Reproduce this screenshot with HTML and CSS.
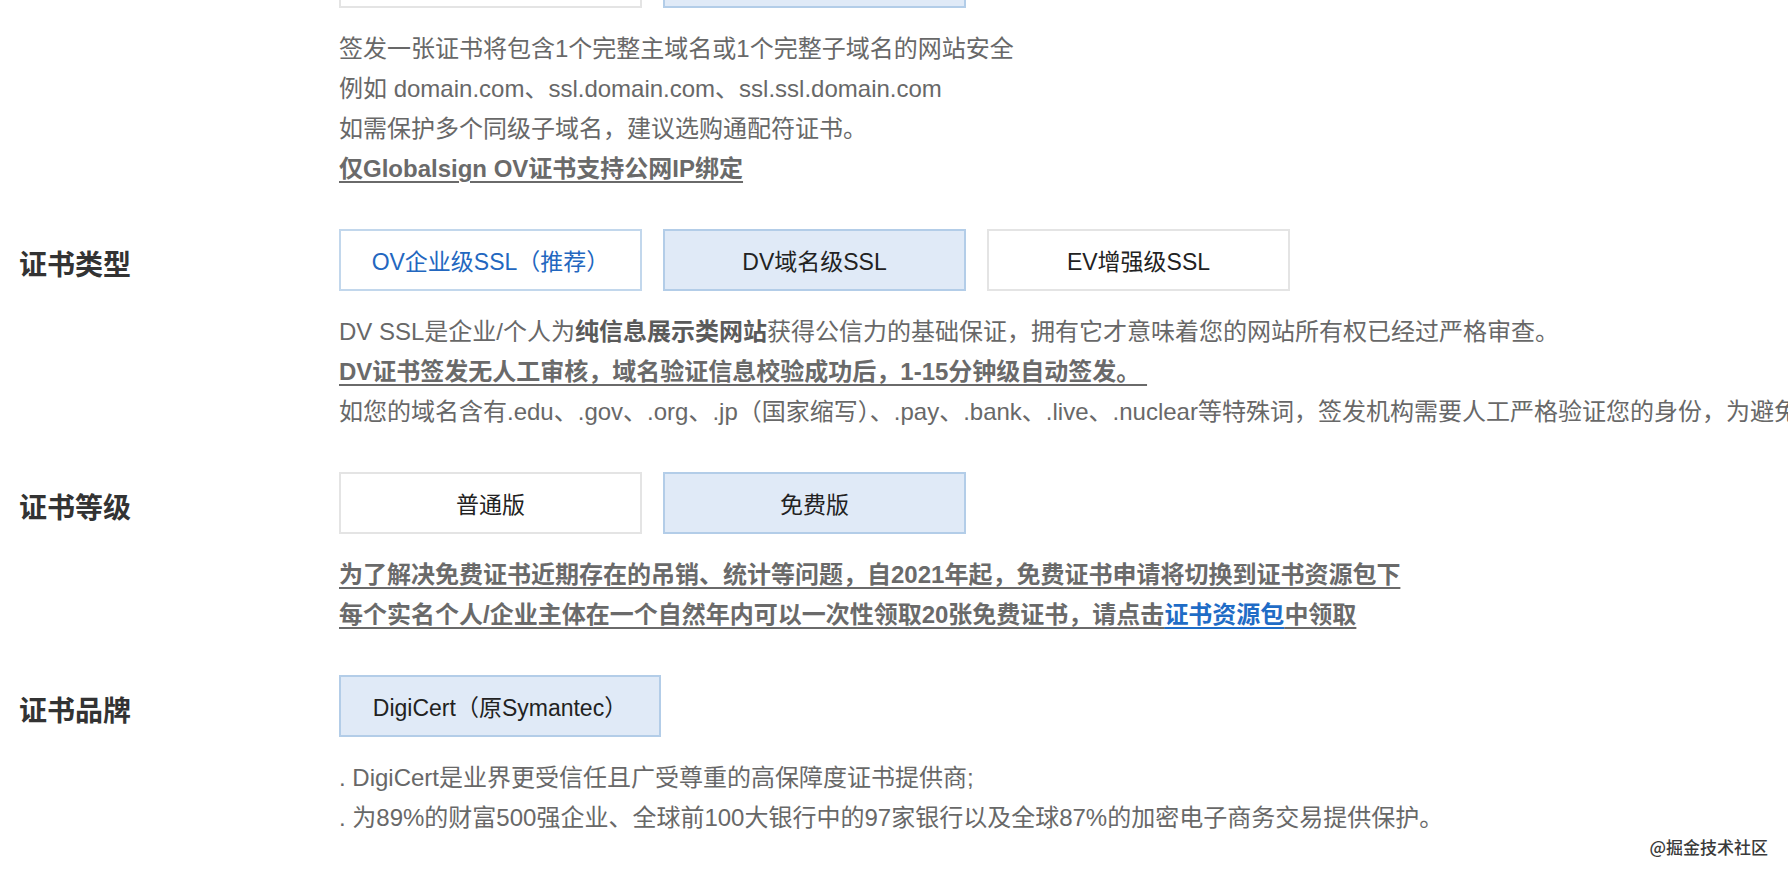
FILE: index.html
```html
<!DOCTYPE html>
<html lang="zh-CN">
<head>
<meta charset="utf-8">
<title>SSL证书选购</title>
<link rel="stylesheet" href="styles.css">
</head>
<body>
<div class="page">
  <div class="row row-first">
    <div class="label"></div>
    <div class="content">
      <div class="opts">
        <div class="opt"></div>
        <div class="opt sel"></div>
      </div>
      <div class="desc">
        <p>签发一张证书将包含1个完整主域名或1个完整子域名的网站安全</p>
        <p>例如 domain.com、ssl.domain.com、ssl.ssl.domain.com</p>
        <p>如需保护多个同级子域名，建议选购通配符证书。</p>
        <p class="strong">仅Globalsign OV证书支持公网IP绑定</p>
      </div>
    </div>
  </div>

  <div class="row">
    <div class="label">证书类型</div>
    <div class="content">
      <div class="opts">
        <div class="opt rec">OV企业级SSL（推荐）</div>
        <div class="opt sel">DV域名级SSL</div>
        <div class="opt">EV增强级SSL</div>
      </div>
      <div class="desc">
        <p>DV SSL是企业/个人为<b>纯信息展示类网站</b>获得公信力的基础保证，拥有它才意味着您的网站所有权已经过严格审查。</p>
        <p class="strong">DV证书签发无人工审核，域名验证信息校验成功后，1-15分钟级自动签发。&nbsp;</p>
        <p>如您的域名含有.edu、.gov、.org、.jp（国家缩写）、.pay、.bank、.live、.nuclear等特殊词，签发机构需要人工严格验证您的身份，为避免</p>
      </div>
    </div>
  </div>

  <div class="row">
    <div class="label">证书等级</div>
    <div class="content">
      <div class="opts">
        <div class="opt">普通版</div>
        <div class="opt sel">免费版</div>
      </div>
      <div class="desc">
        <p class="strong">为了解决免费证书近期存在的吊销、统计等问题，自2021年起，免费证书申请将切换到证书资源包下</p>
        <p class="strong">每个实名个人/企业主体在一个自然年内可以一次性领取20张免费证书，请点击<a class="link" href="#">证书资源包</a>中领取</p>
      </div>
    </div>
  </div>

  <div class="row">
    <div class="label">证书品牌</div>
    <div class="content">
      <div class="opts">
        <div class="opt sel wide">DigiCert（原Symantec）</div>
      </div>
      <div class="desc">
        <p>. DigiCert是业界更受信任且广受尊重的高保障度证书提供商;</p>
        <p>. 为89%的财富500强企业、全球前100大银行中的97家银行以及全球87%的加密电子商务交易提供保护。</p>
      </div>
    </div>
  </div>
</div>
<div class="watermark">@掘金技术社区</div>
</body>
</html>
```

FILE: styles.css
```css
html, body {
  margin: 0;
  padding: 0;
  background: #ffffff;
  overflow: hidden;
}

body {
  width: 1788px;
  height: 876px;
  position: relative;
  font-family: "Liberation Sans", "Noto Sans CJK SC", sans-serif;
  color: #333333;
}

.page {
  padding-left: 19px;
}

.row {
  display: flex;
  margin-top: 40px;
}

.row-first {
  margin-top: -54px;
}

.label {
  flex: none;
  width: 320px;
  height: 62px;
  line-height: 62px;
  padding-top: 3px;
  box-sizing: border-box;
  font-family: "Noto Sans CJK SC", sans-serif;
  font-size: 28px;
  font-weight: 700;
  color: #333333;
}

.content {
  flex: 1;
  min-width: 0;
  overflow: hidden;
}

.opts {
  display: flex;
  gap: 21px;
}

.opt {
  box-sizing: border-box;
  width: 303px;
  height: 62px;
  padding: 0 30px;
  border: 2px solid #e4e4e4;
  background: #ffffff;
  display: flex;
  align-items: center;
  justify-content: center;
  font-size: 23px;
  color: #222222;
  white-space: nowrap;
}

.opt.sel {
  background: #e0eaf7;
  border-color: #b3cde8;
}

.opt.rec {
  color: #2367bf;
  border-color: #c2d7ec;
}

.opt.wide {
  width: 322px;
}

.desc {
  margin-top: 21px;
  font-size: 24px;
  line-height: 40px;
  color: #686868;
  white-space: nowrap;
}

.desc p {
  margin: 0;
}

.desc b {
  font-weight: 700;
  color: #5a5a5a;
}

.desc .strong {
  font-weight: 700;
  color: #6a6a6a;
  text-decoration: underline;
  text-underline-offset: 4px;
  text-decoration-thickness: 2px;
}

.link {
  color: #1f6cc6;
  text-decoration: underline;
}

.watermark {
  position: absolute;
  right: 20px;
  bottom: 17px;
  font-family: "Noto Sans CJK SC", sans-serif;
  font-size: 17px;
  font-weight: 500;
  color: #3a3a3a;
  text-shadow: 0 0 2px #ffffff, 0 0 2px #ffffff;
}
```
